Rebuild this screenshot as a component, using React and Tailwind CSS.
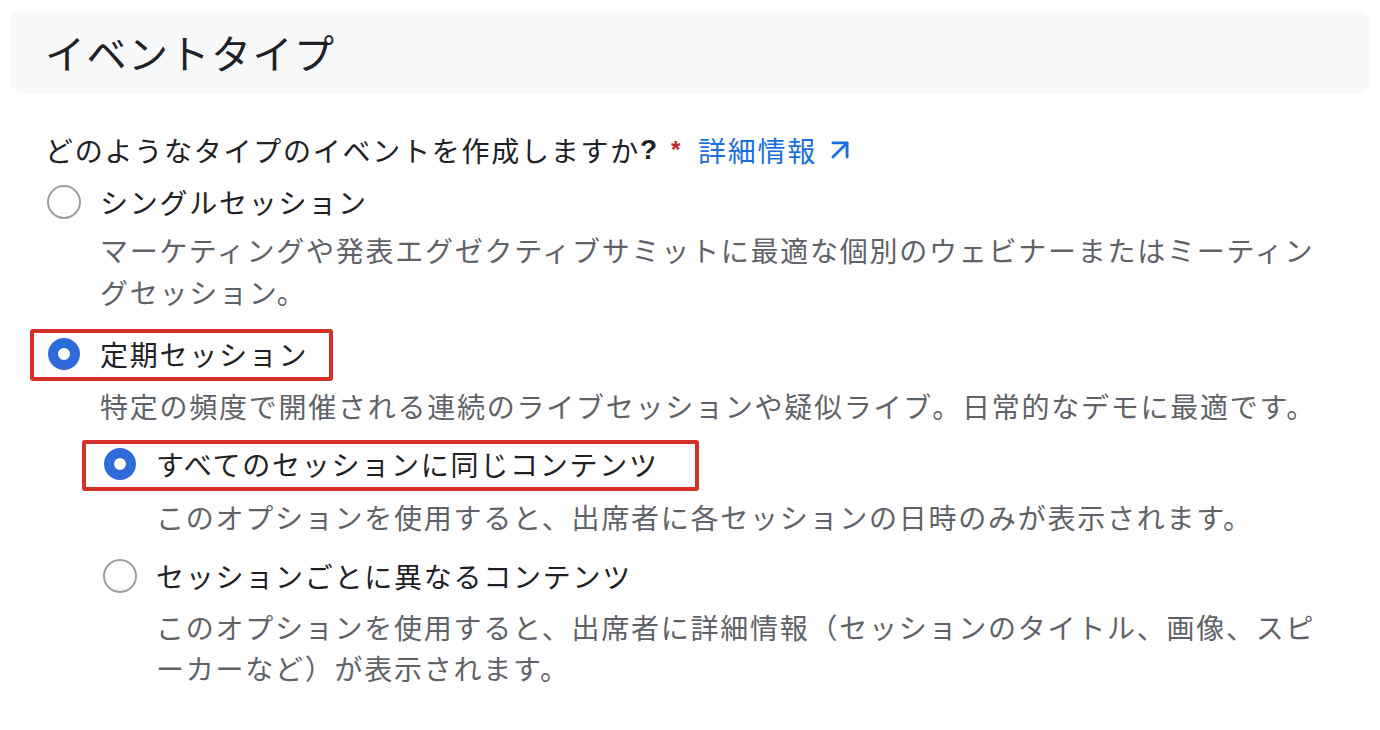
import { ArrowUpRight } from 'lucide-react'

function Radio({ checked }) {
  return (
    <span className="flex w-[38px] h-[42px] items-center justify-center shrink-0">
      {checked ? (
        <span className="block w-[32px] h-[32px] rounded-full border-[10px] border-[#2f6ad9] bg-white" />
      ) : (
        <span className="block w-[34px] h-[34px] rounded-full border-2 border-[#9aa0a6] bg-white" />
      )}
    </span>
  )
}

function Option({ label, checked, highlight, className = '' }) {
  return (
    <div className={`relative flex items-center gap-[17px] ${className}`}>
      {highlight && (
        <span
          className={`absolute pointer-events-none border-4 border-[#d3302a] rounded-[3px] ${highlight}`}
        />
      )}
      <Radio checked={checked} />
      <span className="text-[#202124] leading-[42px]">{label}</span>
    </div>
  )
}

export default function App() {
  return (
    <div
      className="w-[1380px] h-[730px] bg-white overflow-hidden text-[28px] tracking-[1.75px]"
      style={{ fontFamily: '"Noto Sans CJK JP", "Noto Sans", sans-serif' }}
    >
      {/* Section header */}
      <div className="mx-[9px] mt-[9px] h-[85px] rounded-[16px] bg-[#f8f9fa] flex items-center pl-[36px]">
        <h1 className="text-[40px] leading-none tracking-[1.5px] text-[#202124]">イベントタイプ</h1>
      </div>

      <div className="ml-[45px] w-[1280px]">
        {/* Question */}
        <div className="mt-[35px] flex items-center leading-[42px] text-[#202124]">
          <span>どのようなタイプのイベントを作成しますか</span>
          <span className="font-bold" style={{ fontFamily: '"Liberation Sans", sans-serif' }}>?</span>
          <span className="ml-[12px] text-[#c5221f] font-bold text-[24px]" style={{ fontFamily: '"Liberation Sans", sans-serif' }}>*</span>
          <a className="ml-[16px] flex items-center text-[#1a6fe0]">
            <span>詳細情報</span>
            <ArrowUpRight className="ml-[6px] w-[34px] h-[34px]" strokeWidth={2} />
          </a>
        </div>

        {/* Single session */}
        <Option className="mt-[10px]" label="シングルセッション" />
        <p className="mt-[6px] ml-[55px] text-[#5f6368] leading-[42px]">
          マーケティングや発表エグゼクティブサミットに最適な個別のウェビナーまたはミーティングセッション。
        </p>

        {/* Recurring session */}
        <Option
          className="mt-[20px]"
          label="定期セッション"
          checked
          highlight="-left-[15px] -top-[4px] w-[303px] h-[52px]"
        />
        <p className="mt-[10px] ml-[55px] text-[#5f6368] leading-[42px]">
          特定の頻度で開催される連続のライブセッションや疑似ライブ。日常的なデモに最適です。
        </p>

        <div className="ml-[56px]">
          <Option
            className="mt-[16px]"
            label="すべてのセッションに同じコンテンツ"
            checked
            highlight="-left-[19px] -top-[3px] w-[617px] h-[51px]"
          />
          <p className="mt-[11px] ml-[55px] text-[#5f6368] leading-[42px]">
            このオプションを使用すると、出席者に各セッションの日時のみが表示されます。
          </p>

          <Option className="mt-[17px]" label="セッションごとに異なるコンテンツ" />
          <p className="mt-[10px] ml-[55px] text-[#5f6368] leading-[41px]">
            このオプションを使用すると、出席者に詳細情報（セッションのタイトル、画像、スピーカーなど）が表示されます。
          </p>
        </div>
      </div>
    </div>
  )
}
